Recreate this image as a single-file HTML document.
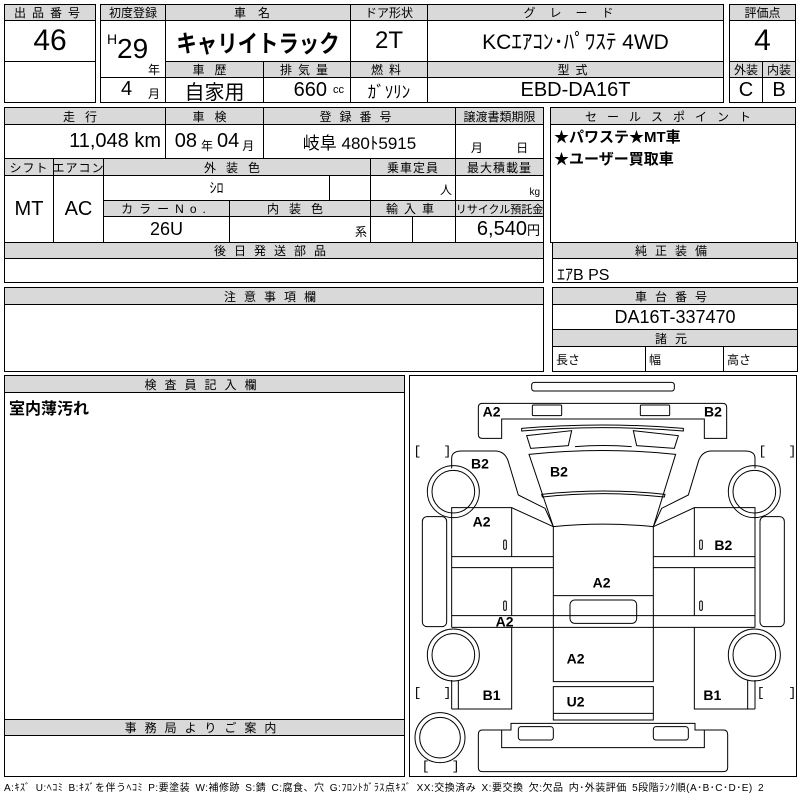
<!DOCTYPE html>
<html><head><meta charset="utf-8">
<style>
*{margin:0;padding:0;box-sizing:border-box}
body{width:800px;height:800px;background:#fff;position:relative;overflow:hidden;font-family:"Liberation Sans","Noto Sans CJK JP",sans-serif;color:#000}
.c{position:absolute;border:1px solid #000;display:flex;align-items:center;justify-content:center;white-space:nowrap;background:#fff}
.h{background:#d9d9d9;font-size:12px;letter-spacing:3px}
.b{border-width:2px}
.v{font-size:20px}
</style></head><body>
<div class="c" style="left:4px;top:4px;width:92px;height:99px;border-width:2px"></div>
<div class="c h" style="left:4px;top:4px;width:92px;height:17px;letter-spacing:6px">出品番号</div>
<div class="c" style="left:4px;top:20px;width:92px;height:42px;font-size:30px">46</div>
<div class="c" style="left:4px;top:61px;width:92px;height:42px"></div>

<div class="c h" style="left:100px;top:4px;width:66px;height:17px;letter-spacing:0">初度登録</div>
<div class="c" style="left:100px;top:20px;width:66px;height:58px;display:block">
 <span style="position:absolute;left:6px;top:10px;font-size:14px">H</span>
 <span style="position:absolute;left:16px;top:12px;font-size:28px">29</span>
 <span style="position:absolute;left:47px;top:40px;font-size:12px">年</span></div>
<div class="c" style="left:100px;top:77px;width:66px;height:26px;display:block">
 <span style="position:absolute;left:20px;top:0px;font-size:20px">4</span>
 <span style="position:absolute;left:47px;top:7px;font-size:12px">月</span></div>
<div class="c h" style="left:165px;top:4px;width:186px;height:17px;letter-spacing:12px">車名</div>
<div class="c" style="left:165px;top:20px;width:186px;height:42px;font-size:24px;font-weight:bold"><span style="display:inline-block;transform:scaleX(0.85)">キャリイトラック</span></div>
<div class="c h" style="left:350px;top:4px;width:78px;height:17px;letter-spacing:0">ドア形状</div>
<div class="c" style="left:350px;top:20px;width:78px;height:42px;font-size:24px">2T</div>
<div class="c h" style="left:427px;top:4px;width:297px;height:17px;letter-spacing:14px">グレード</div>
<div class="c" style="left:427px;top:20px;width:297px;height:42px;font-size:21px">KCｴｱｺﾝ･ﾊﾟﾜｽﾃ 4WD</div>
<div class="c h" style="left:165px;top:61px;width:99px;height:17px;letter-spacing:10px">車歴</div>
<div class="c h" style="left:263px;top:61px;width:88px;height:17px;letter-spacing:6px">排気量</div>
<div class="c h" style="left:350px;top:61px;width:78px;height:17px;letter-spacing:6px">燃料</div>
<div class="c h" style="left:427px;top:61px;width:297px;height:17px;letter-spacing:6px">型式</div>
<div class="c v" style="left:165px;top:77px;width:99px;height:26px">自家用</div>
<div class="c v" style="left:263px;top:77px;width:88px;height:26px;justify-content:flex-end;padding-right:6px">660<span style="font-size:11px;margin-left:6px">cc</span></div>
<div class="c" style="left:350px;top:77px;width:78px;height:26px;font-size:17px">ｶﾞｿﾘﾝ</div>
<div class="c v" style="left:427px;top:77px;width:297px;height:26px">EBD-DA16T</div>

<div class="c h" style="left:729px;top:4px;width:67px;height:17px;letter-spacing:0">評価点</div>
<div class="c" style="left:729px;top:20px;width:67px;height:42px;font-size:30px">4</div>
<div class="c h" style="left:729px;top:61px;width:34px;height:17px;letter-spacing:0">外装</div>
<div class="c h" style="left:762px;top:61px;width:34px;height:17px;letter-spacing:0">内装</div>
<div class="c v" style="left:729px;top:77px;width:34px;height:26px">C</div>
<div class="c v" style="left:762px;top:77px;width:34px;height:26px">B</div>

<div class="c h" style="left:4px;top:107px;width:162px;height:18px;letter-spacing:10px">走行</div>
<div class="c h" style="left:165px;top:107px;width:99px;height:18px;letter-spacing:10px">車検</div>
<div class="c h" style="left:263px;top:107px;width:193px;height:18px;letter-spacing:8px">登録番号</div>
<div class="c h" style="left:455px;top:107px;width:89px;height:18px;letter-spacing:0">譲渡書類期限</div>
<div class="c v" style="left:4px;top:124px;width:162px;height:35px;justify-content:flex-end;padding-right:4px">11,048 km</div>
<div class="c v" style="left:165px;top:124px;width:99px;height:35px">08<span style="font-size:12px;margin:8px 4px 0">年</span>04<span style="font-size:12px;margin:8px 0 0 3px">月</span></div>
<div class="c" style="left:263px;top:124px;width:193px;height:35px;font-size:17px">岐阜 480ﾄ5915</div>
<div class="c" style="left:455px;top:124px;width:89px;height:35px;font-size:12px;align-items:flex-end;padding-bottom:2px;word-spacing:30px">月 日</div>
<div class="c h" style="left:4px;top:158px;width:50px;height:18px;letter-spacing:1px">シフト</div>
<div class="c h" style="left:53px;top:158px;width:51px;height:18px;letter-spacing:1px">エアコン</div>
<div class="c h" style="left:103px;top:158px;width:268px;height:18px;letter-spacing:10px">外装色</div>
<div class="c h" style="left:370px;top:158px;width:86px;height:18px;letter-spacing:1px">乗車定員</div>
<div class="c h" style="left:455px;top:158px;width:89px;height:18px;letter-spacing:1px">最大積載量</div>
<div class="c v" style="left:4px;top:175px;width:50px;height:68px">MT</div>
<div class="c v" style="left:53px;top:175px;width:51px;height:68px">AC</div>
<div class="c" style="left:103px;top:175px;width:227px;height:26px;font-size:14px">ｼﾛ</div>
<div class="c" style="left:329px;top:175px;width:42px;height:26px"></div>
<div class="c" style="left:370px;top:175px;width:86px;height:26px;font-size:12px;justify-content:flex-end;align-items:flex-end;padding:0 3px 2px 0">人</div>
<div class="c" style="left:455px;top:175px;width:89px;height:26px;font-size:10px;justify-content:flex-end;align-items:flex-end;padding:0 3px 2px 0">kg</div>
<div class="c h" style="left:103px;top:200px;width:127px;height:17px;letter-spacing:6px">カラーNo.</div>
<div class="c h" style="left:229px;top:200px;width:142px;height:17px;letter-spacing:10px">内装色</div>
<div class="c h" style="left:370px;top:200px;width:86px;height:17px;letter-spacing:6px">輸入車</div>
<div class="c h" style="left:455px;top:200px;width:89px;height:17px;letter-spacing:0;font-size:11px">リサイクル預託金</div>
<div class="c v" style="left:103px;top:216px;width:127px;height:27px;font-size:18px">26U</div>
<div class="c" style="left:229px;top:216px;width:142px;height:27px;font-size:12px;justify-content:flex-end;align-items:flex-end;padding:0 3px 2px 0">系</div>
<div class="c" style="left:370px;top:216px;width:43px;height:27px"></div>
<div class="c" style="left:412px;top:216px;width:44px;height:27px"></div>
<div class="c v" style="left:455px;top:216px;width:89px;height:27px;justify-content:flex-end;padding-right:3px">6,540<span style="font-size:13px">円</span></div>

<div class="c" style="left:550px;top:107px;width:246px;height:136px;display:block;font-size:15px;font-weight:bold;padding:19px 0 0 3px;line-height:22px">★パワステ★MT車<br>★ユーザー買取車</div>
<div class="c h" style="left:550px;top:107px;width:246px;height:18px;letter-spacing:10px">セールスポイント</div>

<div class="c" style="left:4px;top:242px;width:540px;height:41px"></div>
<div class="c h" style="left:4px;top:242px;width:540px;height:17px;letter-spacing:8px">後日発送部品</div>
<div class="c" style="left:552px;top:242px;width:246px;height:41px;display:block;font-size:16px;padding:18px 0 0 4px">ｴｱB PS</div>
<div class="c h" style="left:552px;top:242px;width:246px;height:17px;letter-spacing:8px">純正装備</div>

<div class="c" style="left:4px;top:287px;width:540px;height:85px"></div>
<div class="c h" style="left:4px;top:287px;width:540px;height:18px;letter-spacing:8px">注意事項欄</div>
<div class="c h" style="left:552px;top:287px;width:246px;height:18px;letter-spacing:8px">車台番号</div>
<div class="c" style="left:552px;top:304px;width:246px;height:26px;font-size:18px">DA16T-337470</div>
<div class="c h" style="left:552px;top:329px;width:246px;height:18px;letter-spacing:8px">諸元</div>
<div class="c" style="left:552px;top:346px;width:94px;height:26px;font-size:12px;justify-content:flex-start;padding-left:3px">長さ</div>
<div class="c" style="left:645px;top:346px;width:79px;height:26px;font-size:12px;justify-content:flex-start;padding-left:3px">幅</div>
<div class="c" style="left:723px;top:346px;width:75px;height:26px;font-size:12px;justify-content:flex-start;padding-left:3px">高さ</div>

<div class="c" style="left:4px;top:375px;width:401px;height:345px;display:block;font-size:16px;font-weight:bold;padding:19px 0 0 4px">室内薄汚れ</div>
<div class="c h" style="left:4px;top:375px;width:401px;height:18px;letter-spacing:8px">検査員記入欄</div>
<div class="c" style="left:4px;top:719px;width:401px;height:58px"></div>
<div class="c h" style="left:4px;top:719px;width:401px;height:17px;letter-spacing:8px">事務局よりご案内</div>

<div class="c" style="left:409px;top:375px;width:388px;height:402px"></div>
<svg style="position:absolute;left:405px;top:375px" width="395" height="400" viewBox="0 0 1185 1200" fill="none" stroke="#000" stroke-width="3">
 <rect x="380" y="22" width="428" height="26" rx="8"/>
 <path d="M232,85 H953 Q965,85 965,97 V190 H898 V132 H290 V190 H232 Q220,190 220,178 V97 Q220,85 232,85 Z"/>
 <rect x="382" y="90" width="88" height="32" rx="3"/><rect x="706" y="90" width="88" height="32" rx="3"/>
 <path d="M350,160 Q592,140 835,160 L835,168 Q592,148 350,168 Z"/>
 <path d="M365,182 L500,167 L490,212 L377,220 Z"/><path d="M685,167 L820,182 L808,220 L695,212 Z"/>
 <path d="M510,215 Q595,208 680,215"/>
 <path d="M372,238 Q592,215 812,238 L745,455 Q595,440 445,455 Z"/>
 <path d="M410,358 Q595,338 780,358 L778,366 Q595,346 412,366 Z"/>
 <path d="M140,280 V250 Q140,228 170,228 H270 Q300,228 310,260 L340,360 L420,400 L445,455"/>
 <path d="M1050,280 V250 Q1050,228 1020,228 H920 Q890,228 880,260 L850,360 L770,400 L745,455"/>
 <circle cx="145" cy="350" r="78"/><circle cx="145" cy="350" r="64"/>
 <circle cx="1048" cy="350" r="78"/><circle cx="1048" cy="350" r="64"/>
 <circle cx="145" cy="840" r="78"/><circle cx="145" cy="840" r="64"/>
 <circle cx="1048" cy="840" r="78"/><circle cx="1048" cy="840" r="64"/>
 <circle cx="105" cy="1088" r="75"/><circle cx="105" cy="1088" r="61"/>
 <rect x="52" y="425" width="73" height="330" rx="14"/><rect x="1065" y="425" width="73" height="330" rx="14"/>
 <path d="M140,428 V398 H320 L445,455 M320,398 V545 M140,1002 H320 V757 M160,915 V1002 M140,915 V1002"/>
 <path d="M140,428 V757"/>
 <path d="M1050,428 V398 H868 L745,455 M868,398 V545 M1050,1002 H868 V757 M1028,915 V1002 M1050,915 V1002"/>
 <path d="M1050,428 V757"/>
 <path d="M140,545 H445 M140,578 H445 M745,545 H1050 M745,578 H1050 M320,578 V722 M868,578 V722"/>
 <path d="M140,722 H1050 M140,757 H1050"/>
 <path d="M445,455 V920 H745 V455 M445,662 H745"/>
 <rect x="495" y="675" width="200" height="70" rx="14"/>
 <rect x="296" y="495" width="8" height="28" rx="4"/><rect x="296" y="678" width="8" height="28" rx="4"/>
 <rect x="884" y="495" width="8" height="28" rx="4"/><rect x="884" y="678" width="8" height="28" rx="4"/>
 <path d="M445,935 H745 V1035 H445 Z M445,1015 H745"/>
 <path d="M232,1065 H318 V1045 H870 V1065 H955 Q968,1065 968,1078 V1178 Q968,1190 955,1190 H232 Q220,1190 220,1178 V1078 Q220,1065 232,1065 Z M290,1065 V1118 H898 V1065"/>
 <rect x="340" y="1055" width="105" height="40" rx="8"/><rect x="745" y="1055" width="105" height="40" rx="8"/>
 <g fill="#000" stroke="none" font-family="Liberation Sans,sans-serif" font-size="42" font-weight="bold">
  <text x="233" y="125">A2</text><text x="897" y="125">B2</text>
  <text x="198" y="280">B2</text><text x="435" y="305">B2</text>
  <text x="203" y="455">A2</text><text x="928" y="525">B2</text>
  <text x="563" y="637">A2</text><text x="272" y="755">A2</text>
  <text x="485" y="865">A2</text><text x="233" y="975">B1</text>
  <text x="895" y="975">B1</text><text x="485" y="995">U2</text>
 </g>
 <g fill="#000" stroke="none" font-family="Liberation Mono,monospace" font-size="40">
  <text x="25" y="240">[</text><text x="115" y="240">]</text>
  <text x="1060" y="240">[</text><text x="1150" y="240">]</text>
  <text x="25" y="965">[</text><text x="115" y="965">]</text>
  <text x="1055" y="965">[</text><text x="1150" y="965">]</text>
  <text x="50" y="1185">[</text><text x="140" y="1185">]</text>
 </g>
</svg>

<div style="position:absolute;left:4px;top:779px;font-size:10px;white-space:nowrap;letter-spacing:0.5px;word-spacing:2px">A:ｷｽﾞ U:ﾍｺﾐ B:ｷｽﾞを伴うﾍｺﾐ P:要塗装 W:補修跡 S:錆 C:腐食、穴 G:ﾌﾛﾝﾄｶﾞﾗｽ点ｷｽﾞ XX:交換済み X:要交換 欠:欠品 内･外装評価 5段階ﾗﾝｸ順(A･B･C･D･E) 2</div>
</body></html>
